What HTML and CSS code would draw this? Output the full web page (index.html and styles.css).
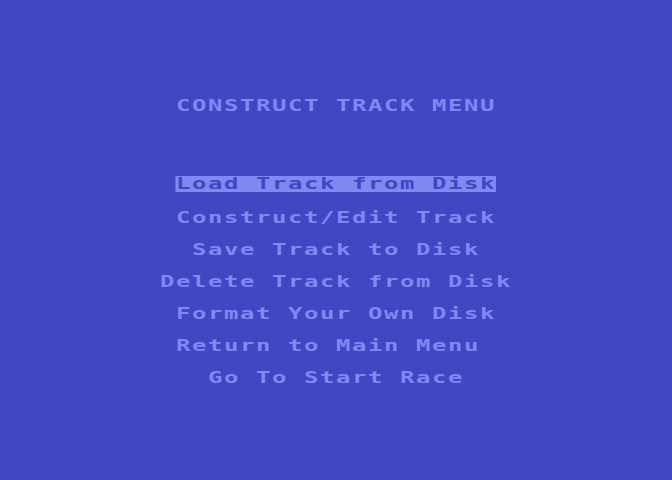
FILE: index.html
```html
<!DOCTYPE html>
<html lang="en">
<head>
<meta charset="utf-8">
<title>Construct Track Menu</title>
<link rel="stylesheet" href="styles.css">
</head>
<body>
<main class="screen">
  <div class="text">
    <h1 class="row title">          CONSTRUCT TRACK MENU</h1>
    <ul class="menu">
      <li class="row">          <span class="sel">Load Track from Disk</span></li>
      <li class="row">          Construct/Edit Track</li>
      <li class="row">           Save Track to Disk</li>
      <li class="row">         Delete Track from Disk</li>
      <li class="row">          Format Your Own Disk</li>
      <li class="row">          Return to Main Menu</li>
      <li class="row">            Go To Start Race</li>
    </ul>
  </div>
</main>
</body>
</html>
```
FILE: styles.css
```css
:root {
  --bg: #4146c2;
  --fg: #8088f4;
}

html, body {
  margin: 0;
  padding: 0;
  background: var(--bg);
}

body {
  width: 672px;
  height: 480px;
  overflow: hidden;
}

/* 40 x 24 character screen, 16px cells, starting 16px in from the left */
.screen {
  padding: 96px 0 0 16px;
}

.text {
  width: 441.4px;
  transform: scaleX(1.45);
  transform-origin: 0 0;
  font-family: "DejaVu Sans Mono", "Liberation Mono", monospace;
  font-weight: bold;
  font-size: 16.5px;
  letter-spacing: 1.1px;
  color: var(--fg);
}

.row {
  display: block;
  height: 16px;
  line-height: 14px;
  white-space: pre;
  margin: 0;
  padding: 0;
  font: inherit;
}

.title {
  margin-bottom: 64px;
}

.menu {
  list-style: none;
  margin: 0;
  padding: 0;
  display: flex;
  flex-direction: column;
  gap: 16px;
}

/* highlighted (inverse video) menu entry */
.sel {
  display: inline-block;
  vertical-align: top;
  height: 16px;
  line-height: 16px;
  background: var(--fg);
  color: var(--bg);
}
```
